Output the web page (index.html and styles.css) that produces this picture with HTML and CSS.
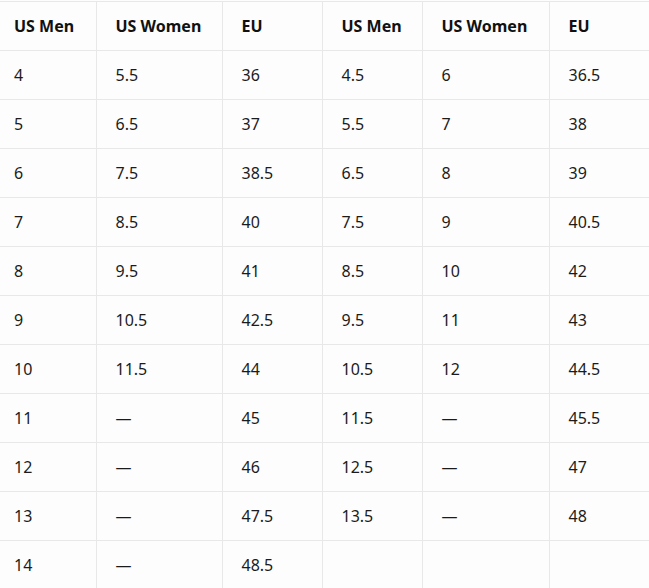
FILE: index.html
```html
<!DOCTYPE html>
<html lang="en">
<head>
<meta charset="utf-8">
<title>Size chart</title>
<link rel="stylesheet" href="styles.css">
</head>
<body>
<table class="sizes">
  <colgroup>
    <col class="c1"><col class="c2"><col class="c3"><col class="c4"><col class="c5"><col class="c6">
  </colgroup>
  <thead>
    <tr><th>US Men</th><th>US Women</th><th>EU</th><th>US Men</th><th>US Women</th><th>EU</th></tr>
  </thead>
  <tbody>
    <tr><td>4</td><td>5.5</td><td>36</td><td>4.5</td><td>6</td><td>36.5</td></tr>
    <tr><td>5</td><td>6.5</td><td>37</td><td>5.5</td><td>7</td><td>38</td></tr>
    <tr><td>6</td><td>7.5</td><td>38.5</td><td>6.5</td><td>8</td><td>39</td></tr>
    <tr><td>7</td><td>8.5</td><td>40</td><td>7.5</td><td>9</td><td>40.5</td></tr>
    <tr><td>8</td><td>9.5</td><td>41</td><td>8.5</td><td>10</td><td>42</td></tr>
    <tr><td>9</td><td>10.5</td><td>42.5</td><td>9.5</td><td>11</td><td>43</td></tr>
    <tr><td>10</td><td>11.5</td><td>44</td><td>10.5</td><td>12</td><td>44.5</td></tr>
    <tr><td>11</td><td>—</td><td>45</td><td>11.5</td><td>—</td><td>45.5</td></tr>
    <tr><td>12</td><td>—</td><td>46</td><td>12.5</td><td>—</td><td>47</td></tr>
    <tr><td>13</td><td>—</td><td>47.5</td><td>13.5</td><td>—</td><td>48</td></tr>
    <tr><td>14</td><td>—</td><td>48.5</td><td></td><td></td><td></td></tr>
  </tbody>
</table>
</body>
</html>
```
FILE: styles.css
```css
html, body {
  margin: 0;
  padding: 0;
  background: #fdfdfd;
}
body {
  font-family: "Noto Sans", "Open Sans", sans-serif;
  font-size: 16px;
  color: #1b1b1b;
  overflow: hidden;
}
.sizes {
  border-collapse: collapse;
  table-layout: fixed;
  width: 654px;
  margin: 1px 0 0 -5px;
  border-top: 1px solid #e8e8e8;
}
.c1 { width: 101px; }
.c2 { width: 126px; }
.c3 { width: 100px; }
.c4 { width: 100px; }
.c5 { width: 127px; }
.c6 { width: 100px; }
.sizes th,
.sizes td {
  text-align: left;
  padding: 12px 10px 12px 19px;
  line-height: 24px;
  height: 24px;
  border-bottom: 1px solid #e8e8e8;
  border-left: 1px solid #e8e8e8;
  white-space: nowrap;
}
.sizes th:first-child,
.sizes td:first-child {
  border-left: none;
}
.sizes th {
  font-weight: 700;
  color: #111;
}
```
